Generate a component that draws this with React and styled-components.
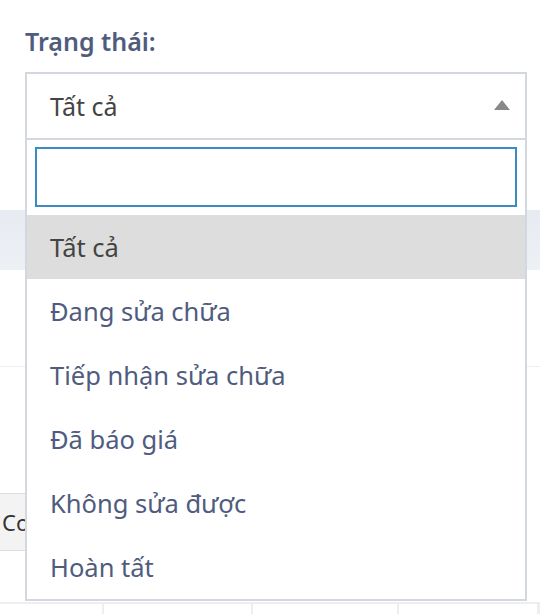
import React, { useState } from "react";
import styled, { createGlobalStyle } from "styled-components";

const GlobalStyle = createGlobalStyle`
  html, body {
    margin: 0;
    padding: 0;
    background: #ffffff;
    font-family: "Noto Sans", "Open Sans", sans-serif;
  }
  * { box-sizing: border-box; }
`;

const Page = styled.div`
  width: 540px;
  height: 614px;
  overflow: hidden;
  position: relative;
`;

const FilterArea = styled.div`
  padding: 26px 0 0 25px;
`;

const Label = styled.div`
  font-size: 25px;
  font-weight: 600;
  line-height: 30px;
  color: #4f5c7e;
  margin-bottom: 16px;
`;

const SelectWrap = styled.div`
  position: relative;
  width: 502px;
  z-index: 5;
`;

const SelectBox = styled.div`
  height: 66px;
  border: 2px solid #d3d7de;
  border-bottom: none;
  background: #fff;
  display: flex;
  align-items: center;
  justify-content: space-between;
  padding: 0 15px 0 23px;
  font-size: 25px;
  color: #444444;
`;

const Arrow = styled.span`
  width: 0;
  height: 0;
  border-left: 8px solid transparent;
  border-right: 8px solid transparent;
  border-bottom: 10px solid #888888;
  margin-top: -2px;
`;

const Dropdown = styled.div`
  position: absolute;
  top: 100%;
  left: 0;
  width: 100%;
  background: #fff;
  border: 2px solid #d3d7de;
`;

const SearchRow = styled.div`
  padding: 7px 8px 8px 8px;
`;

const SearchInput = styled.input`
  display: block;
  width: 100%;
  height: 60px;
  border: 2px solid #3a8bbf;
  outline: none;
  font-size: 22px;
  font-family: inherit;
  padding: 0 10px;
`;

const Option = styled.div`
  height: 64px;
  display: flex;
  align-items: center;
  padding-left: 23px;
  font-size: 25.5px;
  color: ${(p) => (p.$active ? "#444444" : "#4f5c7e")};
  background: ${(p) => (p.$active ? "#dddddd" : "#ffffff")};
`;

const Band = styled.div`
  margin-top: 72px;
  height: 60px;
  background: linear-gradient(180deg, #e7ebf1, #edf0f5);
`;

const Row = styled.div`
  height: 97px;
  border-bottom: 1px solid #eeeeee;
`;

const Toolbar = styled.div`
  margin-top: 126px;
  display: flex;
`;

const ToolButton = styled.div`
  height: 58px;
  width: 120px;
  display: flex;
  align-items: center;
  padding-left: 2px;
  background: #f3f3f3;
  border-top: 1px solid #dddddd;
  border-bottom: 1px solid #dddddd;
  font-size: 22px;
  color: #333333;
`;

const Table = styled.div`
  margin-top: 51px;
  display: grid;
  grid-template-columns: 104px 149px 146px 140px 1fr;
  border-top: 2px solid #eeeeee;
`;

const Cell = styled.div`
  height: 20px;
  border-right: 2px solid #eeeeee;
`;

const options = [
  "Tất cả",
  "Đang sửa chữa",
  "Tiếp nhận sửa chữa",
  "Đã báo giá",
  "Không sửa được",
  "Hoàn tất",
];

export default function App() {
  const [value, setValue] = useState("Tất cả");
  const [query, setQuery] = useState("");

  return (
    <Page>
      <GlobalStyle />
      <FilterArea>
        <Label>Trạng thái:</Label>
        <SelectWrap>
          <SelectBox>
            <span>{value}</span>
            <Arrow />
          </SelectBox>
          <Dropdown>
            <SearchRow>
              <SearchInput value={query} onChange={(e) => setQuery(e.target.value)} />
            </SearchRow>
            {options
              .filter((o) => o.toLowerCase().includes(query.toLowerCase()))
              .map((o) => (
                <Option key={o} $active={o === value} onClick={() => setValue(o)}>
                  {o}
                </Option>
              ))}
          </Dropdown>
        </SelectWrap>
      </FilterArea>
      <Band />
      <Row />
      <Toolbar>
        <ToolButton>Copy</ToolButton>
      </Toolbar>
      <Table>
        <Cell />
        <Cell />
        <Cell />
        <Cell />
        <Cell />
      </Table>
    </Page>
  );
}
